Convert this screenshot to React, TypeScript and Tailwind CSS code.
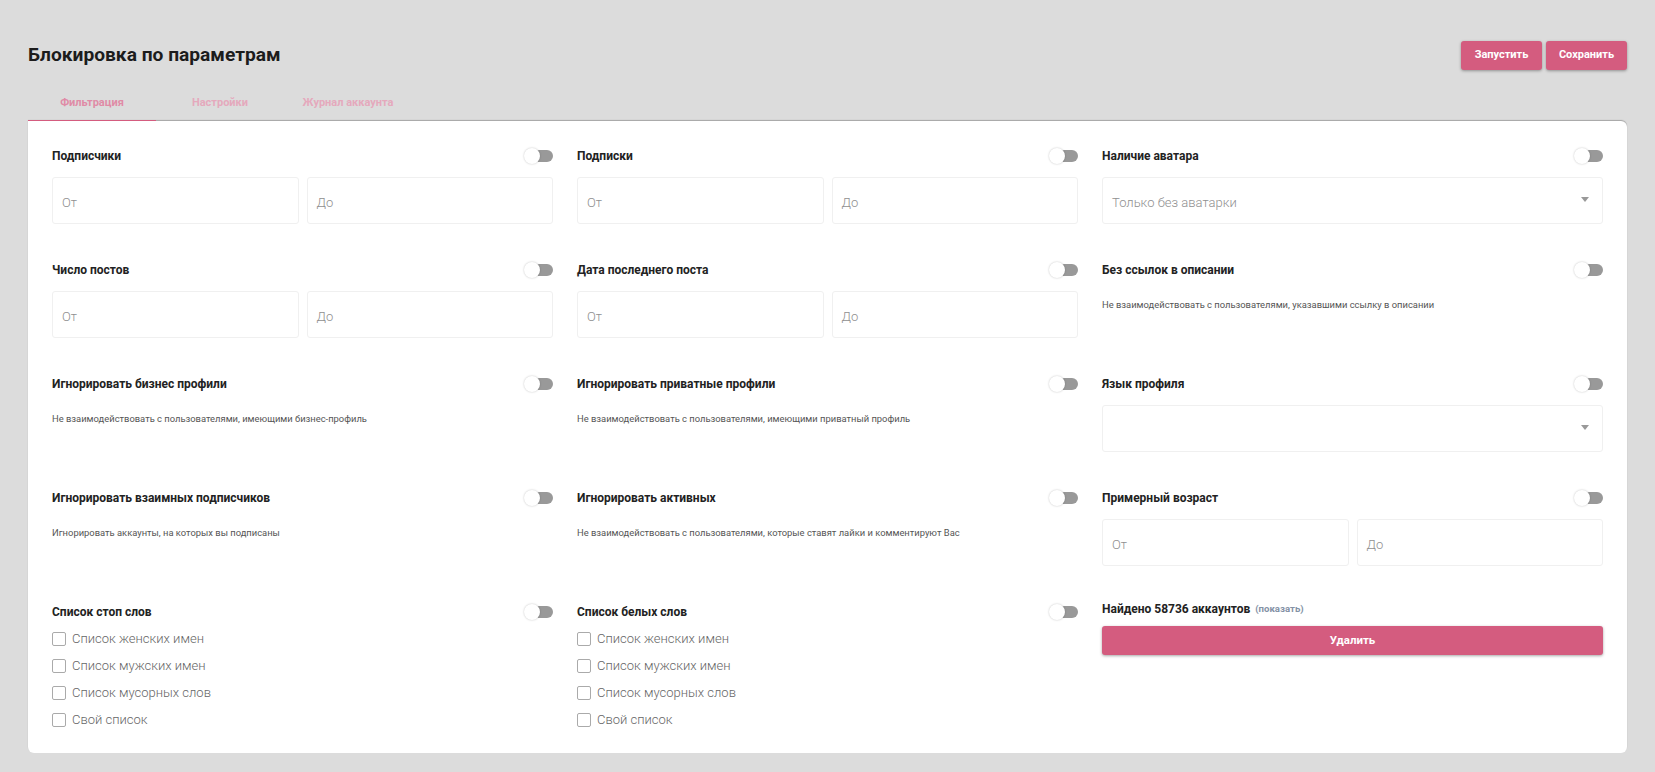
const font = { fontFamily: "Roboto, 'Noto Sans', sans-serif" };

const Toggle = () => (
  <div className="relative h-[12px] w-[29px]">
    <div className="absolute right-0 top-0 h-[12px] w-[24px] rounded-full bg-[#999999]" />
    <div className="absolute left-0 top-[-2px] h-[16px] w-[16px] rounded-full bg-white shadow-[0_0_2px_rgba(0,0,0,0.25)]" />
  </div>
);

const Label = ({ text }: { text: string }) => (
  <div className="flex h-5 translate-y-[1px] items-center justify-between">
    <span className="text-[12px] font-bold text-[#222222]">{text}</span>
    <Toggle />
  </div>
);

const Input = ({ text }: { text: string }) => (
  <div className="flex h-[47px] flex-1 items-center rounded-[3px] border border-[#f0f0f0] bg-white px-[9px] pt-[5px] text-[13px] font-light text-[#8f8f8f]">
    {text}
  </div>
);

const Range = ({ title }: { title: string }) => (
  <div>
    <Label text={title} />
    <div className="mt-3 flex gap-[8px]">
      <Input text="От" />
      <Input text="До" />
    </div>
  </div>
);

const Select = ({ title, value }: { title: string; value?: string }) => (
  <div>
    <Label text={title} />
    <div className="mt-3 flex h-[47px] items-center justify-between rounded-[3px] border border-[#f0f0f0] bg-white pl-[9px] pr-[13px] pt-[5px] text-[13px] font-light text-[#8f8f8f]">
      <span>{value}</span>
      <span className="mb-[8px] h-0 w-0 border-x-[4px] border-t-[5px] border-x-transparent border-t-[#999999]" />
    </div>
  </div>
);

const Note = ({ title, text }: { title: string; text: string }) => (
  <div>
    <Label text={title} />
    <p className="mt-[20px] text-[9.4px] leading-3 text-[#555555]">{text}</p>
  </div>
);

const Words = ({ title }: { title: string }) => (
  <div>
    <Label text={title} />
    <div className="mt-[4px] flex flex-col">
      {["Список женских имен", "Список мужских имен", "Список мусорных слов", "Свой список"].map((item) => (
        <div key={item} className="flex h-[27px] items-center gap-[6px]">
          <span className="h-[14px] w-[14px] rounded-[2px] border border-[#aaaaaa] bg-white" />
          <span className="text-[13px] font-light text-[#666666]">{item}</span>
        </div>
      ))}
    </div>
  </div>
);

const Btn = ({ text }: { text: string }) => (
  <button className="flex h-[29px] w-[81px] items-center justify-center rounded-[3px] bg-[#d45c7f] text-[11px] font-bold text-white shadow-[0_1px_3px_rgba(0,0,0,0.35)]">
    {text}
  </button>
);

export default function App() {
  return (
    <div style={font} className="h-[772px] overflow-hidden bg-[#dcdcdc] pl-[28px] pr-[28px]">
      <div className="flex h-[84px] items-end justify-between pb-[14px]">
        <h1 className="text-[19.2px] font-bold text-[#1c1c1c]">Блокировка по параметрам</h1>
        <div className="flex gap-[4px]">
          <Btn text="Запустить" />
          <Btn text="Сохранить" />
        </div>
      </div>

      <div className="flex h-[37px] pt-[2px] text-[11px] font-bold">
        <div className="flex w-[128px] items-center justify-center border-b border-[#d45c7f] text-[#e08ba6]">Фильтрация</div>
        <div className="flex w-[128px] items-center justify-center text-[#e5a9bc]">Настройки</div>
        <div className="flex w-[128px] items-center justify-center text-[#e5a9bc]">Журнал аккаунта</div>
      </div>

      <div className="h-[632px] rounded-b-[6px] rounded-tr-[6px] bg-white px-6 pt-6 shadow-[0_-1px_1px_rgba(0,0,0,0.25)]">
        <div className="grid grid-cols-3 grid-rows-[79px_79px_79px_79px_auto] gap-x-6 gap-y-[35px]">
          <Range title="Подписчики" />
          <Range title="Подписки" />
          <Select title="Наличие аватара" value="Только без аватарки" />

          <Range title="Число постов" />
          <Range title="Дата последнего поста" />
          <Note title="Без ссылок в описании" text="Не взаимодействовать с пользователями, указавшими ссылку в описании" />

          <Note title="Игнорировать бизнес профили" text="Не взаимодействовать с пользователями, имеющими бизнес-профиль" />
          <Note title="Игнорировать приватные профили" text="Не взаимодействовать с пользователями, имеющими приватный профиль" />
          <Select title="Язык профиля" />

          <Note title="Игнорировать взаимных подписчиков" text="Игнорировать аккаунты, на которых вы подписаны" />
          <Note title="Игнорировать активных" text="Не взаимодействовать с пользователями, которые ставят лайки и комментируют Вас" />
          <Range title="Примерный возраст" />

          <Words title="Список стоп слов" />
          <Words title="Список белых слов" />
          <div>
            <div className="flex h-4 items-center gap-[5px]">
              <span className="text-[12px] font-bold text-[#222222]">Найдено 58736 аккаунтов</span>
              <span className="text-[9.6px] font-bold text-[#8492a6]">(показать)</span>
            </div>
            <button className="mt-[9px] flex h-[29px] w-full items-center justify-center rounded-[3px] bg-[#d45c7f] text-[11.5px] font-bold text-white shadow-[0_1px_3px_rgba(0,0,0,0.35)]">
              Удалить
            </button>
          </div>
        </div>
      </div>
    </div>
  );
}
